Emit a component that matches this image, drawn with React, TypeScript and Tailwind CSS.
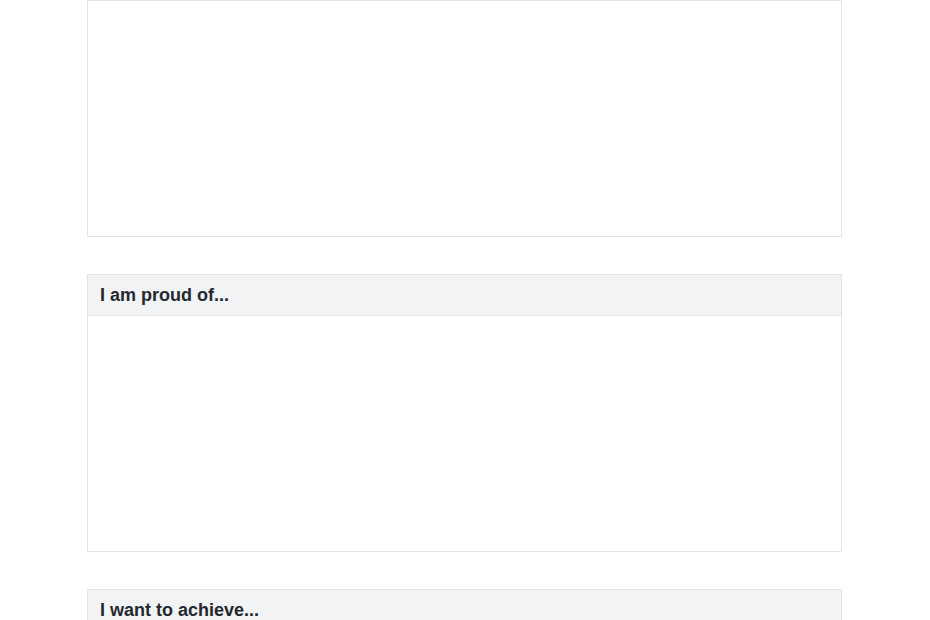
const sections = [
  { title: null },
  { title: 'I am proud of...' },
  { title: 'I want to achieve...' },
];

function Box({ title }: { title: string | null }) {
  return (
    <div className="border border-[#e1e4e8] bg-white">
      {title && (
        <div className="border-b border-[#e1e4e8] bg-[#f2f3f5] px-3 py-[10px]">
          <h3 className="text-[18px] font-bold leading-5 text-[#24292e]">{title}</h3>
        </div>
      )}
      <div className="h-[235px]" />
    </div>
  );
}

export default function App() {
  return (
    <div
      className="min-h-screen bg-white"
      style={{ fontFamily: '"Liberation Sans", Arial, sans-serif' }}
    >
      <div className="ml-[87px] flex w-[755px] flex-col gap-[37px]">
        {sections.map((s, i) => (
          <Box key={i} title={s.title} />
        ))}
      </div>
    </div>
  );
}
